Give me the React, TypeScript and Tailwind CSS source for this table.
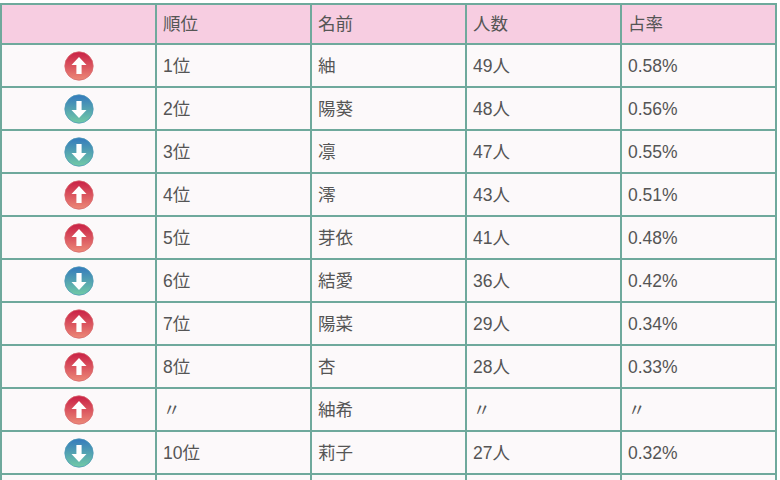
import React from "react";

type Row = { up: boolean; rank: string; name: string; count: string; rate: string };

const rows: Row[] = [
  { up: true, rank: "1位", name: "紬", count: "49人", rate: "0.58%" },
  { up: false, rank: "2位", name: "陽葵", count: "48人", rate: "0.56%" },
  { up: false, rank: "3位", name: "凛", count: "47人", rate: "0.55%" },
  { up: true, rank: "4位", name: "澪", count: "43人", rate: "0.51%" },
  { up: true, rank: "5位", name: "芽依", count: "41人", rate: "0.48%" },
  { up: false, rank: "6位", name: "結愛", count: "36人", rate: "0.42%" },
  { up: true, rank: "7位", name: "陽菜", count: "29人", rate: "0.34%" },
  { up: true, rank: "8位", name: "杏", count: "28人", rate: "0.33%" },
  { up: true, rank: "〃", name: "紬希", count: "〃", rate: "〃" },
  { up: false, rank: "10位", name: "莉子", count: "27人", rate: "0.32%" },
];

function Arrow({ up }: { up: boolean }) {
  const id = up ? "gUp" : "gDown";
  return (
    <svg width="30" height="30" viewBox="0 0 30 30" className="block mx-auto">
      <defs>
        {up ? (
          <linearGradient id={id} x1="0" y1="0" x2="0" y2="1">
            <stop offset="0" stopColor="#c91f45" />
            <stop offset="1" stopColor="#ec8a78" />
          </linearGradient>
        ) : (
          <linearGradient id={id} x1="0" y1="0" x2="0" y2="1">
            <stop offset="0" stopColor="#3479bd" />
            <stop offset="1" stopColor="#72cba6" />
          </linearGradient>
        )}
      </defs>
      <circle cx="15" cy="15" r="14.2" fill={`url(#${id})`} stroke={up ? "#d86a6f" : "#4f9bb8"} strokeWidth="0.8" />
      {up ? (
        <path d="M15 6 L22.5 14 L17.6 14 L17.6 23 L12.4 23 L12.4 14 L7.5 14 Z" fill="#ffffff" />
      ) : (
        <path d="M15 24 L22.5 16 L17.6 16 L17.6 7 L12.4 7 L12.4 16 L7.5 16 Z" fill="#ffffff" />
      )}
    </svg>
  );
}

export default function App() {
  const border = "border-2 border-[#6fa99c]";
  const cell = `${border} px-[6px] text-left align-middle font-normal text-[#555555]`;
  return (
    <div
      className="bg-white w-[780px] h-[480px] overflow-hidden pt-[3px]"
      style={{ fontFamily: '"Liberation Sans", "Noto Sans CJK JP", sans-serif' }}
    >
      <table className="table-fixed border-collapse w-[775px] text-[17.5px] leading-[24px]">
        <colgroup>
          <col className="w-[155px]" />
          <col className="w-[155px]" />
          <col className="w-[155px]" />
          <col className="w-[155px]" />
          <col className="w-[155px]" />
        </colgroup>
        <thead>
          <tr className="bg-[#f7cde1] h-[40px]">
            <th className={cell}></th>
            <th className={cell}>順位</th>
            <th className={cell}>名前</th>
            <th className={cell}>人数</th>
            <th className={cell}>占率</th>
          </tr>
        </thead>
        <tbody>
          {rows.map((r, i) => (
            <tr key={i} className="bg-[#fcf9fa] h-[43px]">
              <td className={`${border} align-middle`}>
                <Arrow up={r.up} />
              </td>
              <td className={cell}>{r.rank}</td>
              <td className={cell}>{r.name}</td>
              <td className={cell}>{r.count}</td>
              <td className={cell}>{r.rate}</td>
            </tr>
          ))}
          <tr className="bg-[#fcf9fa] h-[43px]">
            <td className={border}></td>
            <td className={border}></td>
            <td className={border}></td>
            <td className={border}></td>
            <td className={border}></td>
          </tr>
        </tbody>
      </table>
    </div>
  );
}
